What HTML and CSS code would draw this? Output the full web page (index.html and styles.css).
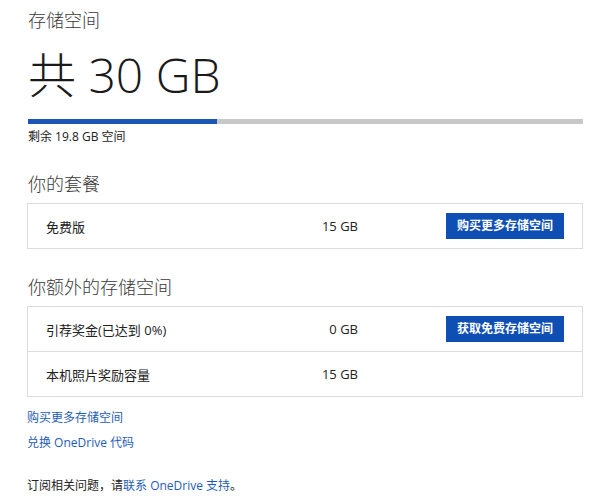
FILE: index.html
```html
<!DOCTYPE html>
<html lang="zh-CN">
<head>
<meta charset="utf-8">
<title>存储空间</title>
<link rel="stylesheet" href="styles.css">
</head>
<body>
<main class="page">
  <h1 class="title">存储空间</h1>
  <div class="total">共 30 GB</div>
  <div class="bar"><div class="bar-fill" style="width: 34%"></div></div>
  <div class="remain">剩余 19.8 GB 空间</div>

  <h2 class="section">你的套餐</h2>
  <div class="box">
    <div class="row">
      <span class="label">免费版</span>
      <span class="value">15 GB</span>
      <span class="action"><a class="btn" href="#">购买更多存储空间</a></span>
    </div>
  </div>

  <h2 class="section">你额外的存储空间</h2>
  <div class="box">
    <div class="row">
      <span class="label">引荐奖金(已达到 0%)</span>
      <span class="value">0 GB</span>
      <span class="action"><a class="btn" href="#">获取免费存储空间</a></span>
    </div>
    <div class="row">
      <span class="label">本机照片奖励容量</span>
      <span class="value">15 GB</span>
      <span class="action"></span>
    </div>
  </div>

  <div class="links">
    <a class="link" href="#">购买更多存储空间</a>
    <a class="link" href="#">兑换 OneDrive 代码</a>
  </div>

  <p class="footer">订阅相关问题，请<a class="link-inline" href="#">联系 OneDrive 支持</a>。</p>
</main>
</body>
</html>
```

FILE: styles.css
```css
html, body {
  margin: 0;
  padding: 0;
  background: #ffffff;
}

body {
  font-family: "Open Sans", "Noto Sans CJK SC", sans-serif;
  color: #222222;
}

.page {
  width: 556px;
  padding: 8px 0 0 27px;
}

.title {
  margin: 0;
  font-size: 18px;
  line-height: 24px;
  font-weight: 300;
  color: #3a3a3a;
  padding-left: 1px;
}

.total {
  margin-top: 18px;
  font-size: 48px;
  line-height: 50px;
  font-weight: 300;
  color: #1a1a1a;
  padding-left: 1px;
}

.bar {
  margin-top: 19px;
  margin-left: 1px;
  height: 5px;
  background: #c8c8c8;
}

.bar-fill {
  height: 5px;
  background: #1b55b5;
}

.remain {
  margin-top: 4px;
  font-size: 12px;
  line-height: 18px;
  padding-left: 1px;
}

.section {
  margin: 26px 0 0 0;
  font-size: 18px;
  line-height: 24px;
  font-weight: 300;
  color: #3a3a3a;
  padding-left: 1px;
}

.box {
  margin-top: 7px;
  border: 1px solid #dcdcdc;
}

.row {
  display: grid;
  grid-template-columns: 272px 40px 1fr;
  align-items: center;
  min-height: 44px;
  padding: 0 18px;
  font-size: 13px;
}

.row + .row {
  border-top: 1px solid #dcdcdc;
}

.value {
  text-align: right;
  white-space: nowrap;
}

.action {
  display: flex;
  justify-content: flex-end;
}

.btn {
  display: block;
  width: 118px;
  height: 26px;
  line-height: 26px;
  text-align: center;
  background: #0f4fb4;
  color: #ffffff;
  font-size: 12px;
  font-weight: 700;
  text-decoration: none;
}

.links {
  margin-top: 11px;
  display: flex;
  flex-direction: column;
  gap: 5px;
}

.link {
  font-size: 12px;
  line-height: 20px;
  color: #1f5db5;
  text-decoration: none;
}

.footer {
  margin: 23px 0 0 0;
  font-size: 12px;
  line-height: 20px;
}

.link-inline {
  color: #1f5db5;
  text-decoration: none;
}
```
